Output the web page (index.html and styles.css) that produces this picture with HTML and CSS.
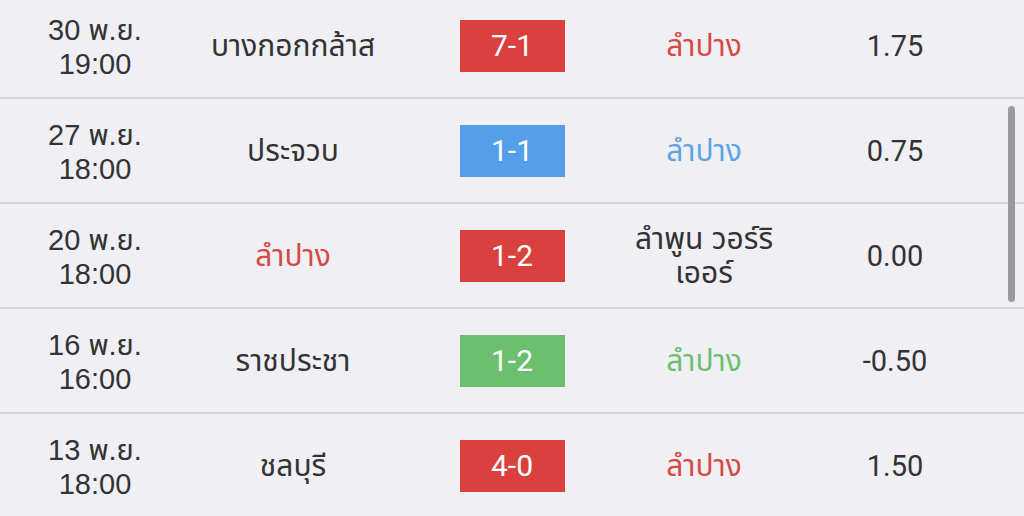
FILE: index.html
```html
<!DOCTYPE html>
<html lang="th">
<head>
<meta charset="utf-8">
<link rel="stylesheet" href="styles.css">
</head>
<body>
<div class="list">
  <div class="row">
    <div class="date">30 พ.ย.<br>19:00</div>
    <div class="team">บางกอกกล้าส</div>
    <div class="score-cell"><span class="score lose">7-1</span></div>
    <div class="team lose-text">ลำปาง</div>
    <div class="odds">1.75</div>
  </div>
  <div class="row">
    <div class="date">27 พ.ย.<br>18:00</div>
    <div class="team">ประจวบ</div>
    <div class="score-cell"><span class="score draw">1-1</span></div>
    <div class="team draw-text">ลำปาง</div>
    <div class="odds">0.75</div>
  </div>
  <div class="row">
    <div class="date">20 พ.ย.<br>18:00</div>
    <div class="team lose-text">ลำปาง</div>
    <div class="score-cell"><span class="score lose">1-2</span></div>
    <div class="team">ลำพูน วอร์ริ<br>เออร์</div>
    <div class="odds">0.00</div>
  </div>
  <div class="row">
    <div class="date">16 พ.ย.<br>16:00</div>
    <div class="team">ราชประชา</div>
    <div class="score-cell"><span class="score win">1-2</span></div>
    <div class="team win-text">ลำปาง</div>
    <div class="odds">-0.50</div>
  </div>
  <div class="row">
    <div class="date">13 พ.ย.<br>18:00</div>
    <div class="team">ชลบุรี</div>
    <div class="score-cell"><span class="score lose">4-0</span></div>
    <div class="team lose-text">ลำปาง</div>
    <div class="odds">1.50</div>
  </div>
</div>
<div class="scrollbar"></div>
</body>
</html>
```
FILE: styles.css
```css
html, body {
  margin: 0;
  padding: 0;
  background: #efeff4;
  overflow: hidden;
  height: 516px;
}
body {
  position: relative;
  font-family: "Liberation Sans", "Noto Sans Thai", "Noto Sans", sans-serif;
  color: #333333;
}
.list {
  margin-top: -6px;
}
.row {
  display: grid;
  grid-template-columns: 190px 206px 232px 152px 230px;
  height: 103px;
  border-bottom: 2px solid #d6d6da;
  align-items: center;
  text-align: center;
}
.date {
  font-size: 29px;
  line-height: 34px;
  padding-top: 2px;
}
.team {
  font-size: 30px;
  line-height: 34px;
}
.score-cell {
  display: flex;
  justify-content: center;
}
.score {
  display: flex;
  align-items: center;
  justify-content: center;
  width: 105px;
  height: 52px;
  color: #ffffff;
  font-family: Roboto, "Liberation Sans", sans-serif;
  font-size: 30px;
  font-weight: 400;
}
.lose { background: #d9403e; }
.draw { background: #559fe9; }
.win { background: #6cbf6e; }
.lose-text { color: #d64a45; }
.draw-text { color: #5ea5e6; }
.win-text { color: #6cbf6f; }
.odds {
  font-family: Roboto, "Liberation Sans", sans-serif;
  font-size: 29px;
  font-weight: 400;
  color: #333333;
}
.scrollbar {
  position: absolute;
  left: 1008px;
  top: 106px;
  width: 7px;
  height: 196px;
  border-radius: 4px;
  background: #9a9a9e;
}
```
